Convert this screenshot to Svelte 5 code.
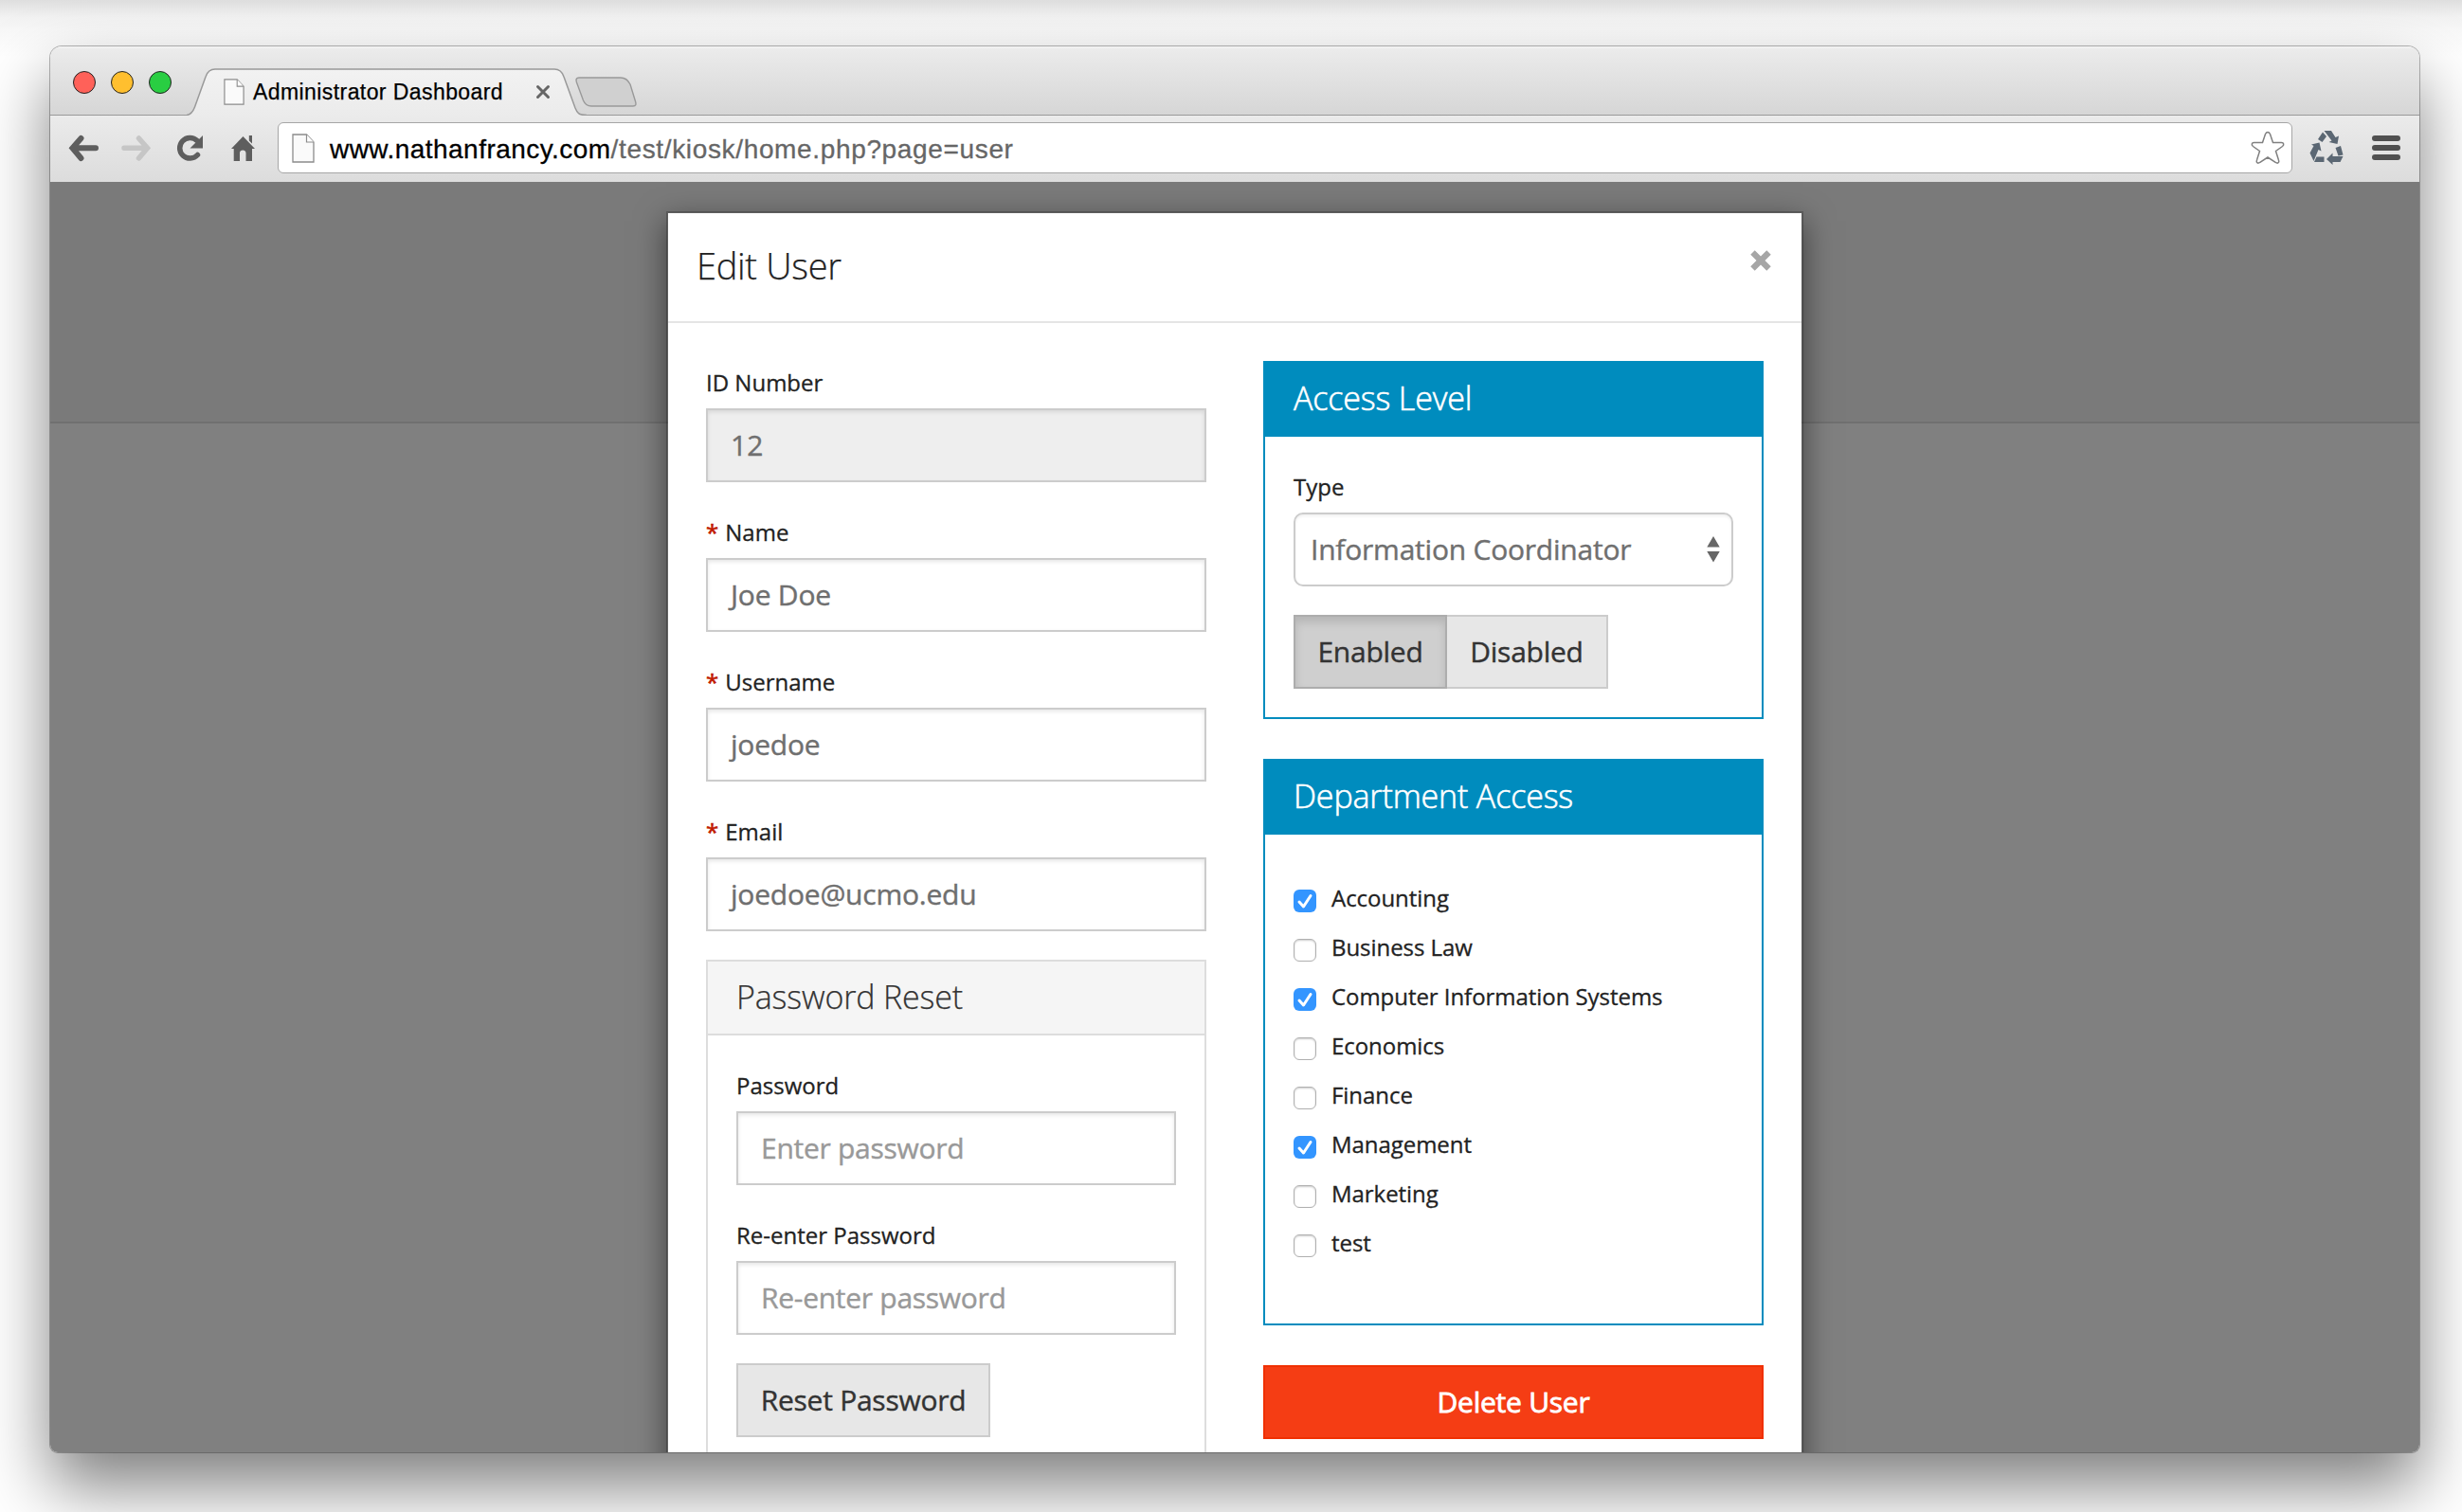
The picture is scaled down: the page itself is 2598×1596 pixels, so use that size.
<script>
  const fields = [
    { label: 'ID Number', value: '12', disabled: true },
    { label: 'Name', value: 'Joe Doe', required: true },
    { label: 'Username', value: 'joedoe', required: true },
    { label: 'Email', value: 'joedoe@ucmo.edu', required: true }
  ];
  const passwords = [
    { label: 'Password', hint: 'Enter password' },
    { label: 'Re-enter Password', hint: 'Re-enter password' }
  ];
  const departments = [
    ['Accounting', true],
    ['Business Law', false],
    ['Computer Information Systems', true],
    ['Economics', false],
    ['Finance', false],
    ['Management', true],
    ['Marketing', false],
    ['test', false]
  ];
</script>

{#snippet pageIcon(cls)}
  <svg class={cls} viewBox="0 0 24 31" preserveAspectRatio="none">
    <path d="M1 1H15.500L23 9V30H1Z" fill="#fafafa" stroke="#8c8c8c" stroke-width="1.300" />
    <path d="M15.500 1V9H23" fill="#fff" stroke="#8c8c8c" stroke-width="1.200" />
  </svg>
{/snippet}

<div class="desktop">
  <div class="window">
    <header class="tabs">
      <div class="lights"><i class="red"></i><i class="yellow"></i><i class="green"></i></div>
      <div class="tab">
        <svg class="tab-shape" viewBox="0 0 422 51">
          <path d="M0 49.500C5 49 7 45 8.500 41L20 9C22 3 25 1 30 1H388C393 1 396 3 398 9L410 42C412 47 413.500 49.500 420 49.500L422 51H0Z" fill="url(#tabfill)" />
          <path d="M0 49.500C5 49 7 45 8.500 41L20 9C22 3 25 1 30 1H388C393 1 396 3 398 9L410 42C412 47 413.500 49.500 422 49.500" fill="none" stroke="#999" stroke-width="1.500" />
          <defs><linearGradient id="tabfill" x2="0" y2="1"><stop stop-color="#f2f2f2" /><stop offset="1" stop-color="#ebebeb" /></linearGradient></defs>
        </svg>
        <div class="tab-content">
          {@render pageIcon('tab-page')}
          <span class="tab-title">Administrator Dashboard</span>
          <svg class="tab-close" viewBox="0 0 16 16"><path d="M2.500 2.500L13.500 13.500M13.500 2.500L2.500 13.500" stroke="#666" stroke-width="3" stroke-linecap="round" /></svg>
        </div>
      </div>
      <svg class="new-tab" viewBox="0 0 65 32">
        <path d="M4 1H48C53 1 56 4 58 8L63.500 26C64.500 29.500 64 31 61 31H17C13 31 10 28.500 8.500 25L1.500 6C.5 3 1 1 4 1Z" fill="#d0d0d0" stroke="#999" stroke-width="1.400" />
      </svg>
    </header>
    <div class="toolbar">
      <svg class="nav" viewBox="0 -1 200 40">
        <path d="M14.500 9L5.500 19.300L14.500 30M6.500 19.300H30" fill="none" stroke="#5e5e5e" stroke-width="6" stroke-linecap="round" />
        <path d="M75.500 9L84.500 19.300L75.500 30M60 19.300H83" fill="none" stroke="#c6c6c6" stroke-width="5.500" stroke-linecap="round" />
        <path d="M137.500 26.500A10.800 10.800 0 1 1 137 11.500" fill="none" stroke="#5e5e5e" stroke-width="5.500" stroke-linecap="round" />
        <path d="M143 6V19.500H129.500Z" fill="#5e5e5e" />
        <path d="M185.500 7L198 20H195V33H188.500V24.500C188.500 20.500 182 20.500 182 24.500V33H175.700V20H173Z" fill="#5e5e5e" />
        <path d="M191.800 6H195V14.500L191.800 11.500Z" fill="#5e5e5e" />
      </svg>
      <div class="address">
        {@render pageIcon('url-page')}
        <span class="url"><b>www.nathanfrancy.com</b>/test/kiosk/home.php?page=user</span>
        <svg class="star" viewBox="0 0 36 36">
          <path d="M18 1.500C19.500 1.500 20 2.500 20.500 3.500L23.500 12.500H32.500C35 12.500 35.500 15 33.500 16.500L26.500 21.500L29.500 31C30.500 33.500 28.500 35 26.500 33.500L18 28L9.500 33.500C7.500 35 5.500 33.500 6.500 31L9.500 21.500L2.500 16.500C.5 15 1 12.500 3.500 12.500H12.500L15.500 3.500C16 2.500 16.500 1.500 18 1.500Z" fill="#fff" stroke="#808080" stroke-width="1.500" />
        </svg>
      </div>
      <svg class="recycle" viewBox="0 0 36 36">
        <g fill="#5b6773">
          <path d="M15.500 0H23L27.500 7L31 5.500L29.500 14L20.500 12L23.500 10.500Z" />
          <path d="M14 1.500L18 6L13.500 12L9 9Z" />
          <path d="M2 14.500L10.500 12.500L12.500 21.500L9.500 20L4.500 32L.5 23.500L4.500 16Z" />
          <path d="M7.500 27.500H15.500V33H5Z" />
          <path d="M27.500 18L33 16L35.500 25.500L30.500 26.500Z" />
          <path d="M18 30L24.500 23.500V27H35.500L32.500 33H24.500V36Z" />
        </g>
      </svg>
      <svg class="menu" viewBox="0 0 30 26">
        <path d="M3 3H27M3 13H27M3 23H27" stroke="#505050" stroke-width="6" stroke-linecap="round" />
      </svg>
    </div>

    <main class="page">
      <section class="modal">
        <header class="modal-head">
          <h1>Edit User</h1>
          <svg class="close" viewBox="0 0 22 22"><path d="M3.200 3.200L18.800 18.800M18.800 3.200L3.200 18.800" stroke="#a6a6a6" stroke-width="5.800" /></svg>
        </header>
        <div class="columns">
          <div class="column">
            {#each fields as f}
              <div class="field">
                <span class="label">{#if f.required}<em>*</em>{' '}{/if}{f.label}</span>
                <div class="input" class:disabled={f.disabled}>{f.value}</div>
              </div>
            {/each}
            <div class="panel plain">
              <h2>Password Reset</h2>
              <div class="panel-body">
                {#each passwords as p}
                  <div class="field">
                    <span class="label">{p.label}</span>
                    <div class="input hint">{p.hint}</div>
                  </div>
                {/each}
                <button class="btn reset">Reset Password</button>
              </div>
            </div>
          </div>
          <div class="column">
            <div class="panel blue">
              <h2>Access Level</h2>
              <div class="panel-body access">
                <span class="label">Type</span>
                <div class="select">
                  <span>Information Coordinator</span>
                  <svg class="arrows" viewBox="0 0 14 28"><path d="M7 0L13.700 11.500H.3ZM7 27.500L.3 16H13.700Z" fill="#666" /></svg>
                </div>
                <div class="group">
                  <button class="btn active">Enabled</button>
                  <button class="btn off">Disabled</button>
                </div>
              </div>
            </div>
            <div class="panel blue">
              <h2>Department Access</h2>
              <div class="panel-body checks">
                {#each departments as [name, on]}
                  <div class="check">
                    <span class="box" class:on>
                      {#if on}<svg viewBox="0 0 24 24"><path d="M6 13L10.500 18L18 6.500" fill="none" stroke="#fff" stroke-width="3" stroke-linecap="round" stroke-linejoin="round" /></svg>{/if}
                    </span>
                    <span class="check-label">{name}</span>
                  </div>
                {/each}
              </div>
            </div>
            <button class="delete">Delete User</button>
          </div>
        </div>
      </section>
    </main>
  </div>
</div>

<style>
  :global(body) { margin: 0; overflow: hidden; }
  .desktop {
    box-sizing: border-box; width: 2598px; height: 1596px; padding: 49px 45px 0 53px; overflow: hidden;
    background: linear-gradient(#dedede, #f2f2f2 18px, #f8f8f8 32px, #fff 60px);
    font-family: "Open Sans", "Noto Sans", sans-serif; color: #222;
  }
  svg { display: block; flex: none; }
  h1, h2 { margin: 0; font-weight: 300; letter-spacing: -.15px; -webkit-text-stroke: .25px currentColor; }
  .window {
    width: 2500px; height: 1484px; border-radius: 12px 12px 8px 8px; overflow: hidden;
    display: flex; flex-direction: column;
    box-shadow: 0 0 0 1px rgba(0, 0, 0, .28), 0 36px 70px rgba(0, 0, 0, .5);
  }
  .tabs {
    box-sizing: border-box; height: 73px; flex: none; display: flex; align-items: flex-end;
    background: linear-gradient(#f4f4f4, #ebebeb 3px, #d6d6d6); border-bottom: 1px solid #999;
  }
  .lights { display: flex; gap: 16px; padding: 0 0 22px 24px; }
  .lights i { box-sizing: border-box; width: 24px; height: 24px; border-radius: 50%; border: 1px solid; }
  .red { background: #ff6159; border-color: #e2463f; }
  .yellow { background: #ffbf2f; border-color: #e0a023; }
  .green { background: #29ce42; border-color: #1dad2b; }
  .tab { display: grid; width: 422px; height: 51px; margin: 0 0 -2px 16px; }
  .tab > * { grid-area: 1 / 1; }
  .tab-shape { width: 422px; height: 51px; }
  .tab-content { display: flex; align-items: center; padding: 0 0 2px 39px; }
  .tab-page { width: 22px; height: 28px; }
  .tab-title {
    margin-left: 9px; width: 265px; font: 23px/28px "Liberation Sans", Arial, sans-serif;
    letter-spacing: .42px; -webkit-text-stroke: .25px currentColor; color: #000; white-space: nowrap;
  }
  .tab-close { width: 16px; height: 16px; margin-left: 33px; }
  .new-tab { width: 65px; height: 32px; margin: 0 0 8px -12px; }
  .toolbar {
    box-sizing: border-box; height: 70px; flex: none; display: flex; align-items: center;
    background: linear-gradient(#ebebeb, #dcdcdc); padding: 0 20px 2px 18px;
  }
  .nav { width: 200px; height: 40px; }
  .address {
    box-sizing: border-box; width: 2126px; height: 54px; margin-left: 22px; padding: 0 7px 0 14px;
    display: flex; align-items: center; background: #fff; border: 1.500px solid #a6a6a6; border-radius: 6px;
  }
  .url-page { width: 24px; height: 31px; }
  .url {
    flex: 1; margin-left: 16px; padding-top: 3px; font: 28px/36px "Liberation Sans", Arial, sans-serif;
    letter-spacing: .65px; -webkit-text-stroke: .3px currentColor; color: #666;
  }
  .url b { font-weight: 400; letter-spacing: .46px; color: #000; }
  .star { width: 36px; height: 36px; }
  .recycle { width: 36px; height: 36px; margin-left: 18px; }
  .menu { width: 30px; height: 26px; margin-left: 30px; }

  .page {
    flex: 1; min-height: 0; display: flex; justify-content: center; align-items: flex-start;
    padding-top: 31px; overflow: hidden;
    background: linear-gradient(#7a7a7a 253px, #707070 253px, #707070 255px, #808080 255px);
  }
  .modal {
    width: 1196px; height: 1500px; flex: none; background: #fff; background-clip: padding-box;
    border: 2px solid rgba(0, 0, 0, .22); box-shadow: 0 10px 30px rgba(0, 0, 0, .5);
  }
  .modal-head {
    box-sizing: border-box; height: 116px; display: flex; justify-content: space-between;
    padding: 29px 31px 0 30px; border-bottom: 2px solid #e5e5e5;
  }
  .modal-head h1 { font-size: 38px; line-height: 52px; letter-spacing: -.3px; }
  .close { width: 24px; height: 24px; margin-top: 9px; }
  .columns { display: flex; justify-content: space-between; padding: 40px; }
  .column { width: 528px; }
  .field { height: 158px; display: flex; flex-direction: column; box-sizing: border-box; }
  .label {
    display: block; height: 50px; line-height: 46px; font-size: 24px; white-space: pre;
    -webkit-text-stroke: .3px currentColor;
  }
  .label em { font-style: normal; letter-spacing: .8px; color: #c01a00; -webkit-text-stroke: .6px currentColor; }
  .input {
    box-sizing: border-box; height: 78px; padding: 0 24px; line-height: 74px; font-size: 30px;
    letter-spacing: -.22px; -webkit-text-stroke: .4px currentColor;
    color: #6f6f6f; background: #fff; border: 2px solid #ccc; box-shadow: inset 0 2px 4px rgba(0, 0, 0, .1);
  }
  .disabled { background: #eee; letter-spacing: 0; }
  .hint { color: #999; letter-spacing: -.28px; }
  .panel { box-sizing: border-box; border: 2px solid #ddd; }
  .panel h2 { box-sizing: border-box; height: 78px; padding: 0 30px; font-size: 34px; line-height: 74px; color: #333; }
  .plain h2 { background: #f5f5f5; border-bottom: 2px solid #ddd; }
  .panel-body { padding: 30px 30px 0; }
  .plain { height: 620px; }
  .blue { border-color: #008cbe; margin-bottom: 42px; }
  .blue h2 { background: #008cbe; color: #fff; -webkit-text-stroke: .6px currentColor; }
  .access { height: 296px; box-sizing: border-box; }
  .select {
    box-sizing: border-box; height: 78px; display: flex; align-items: center; justify-content: space-between;
    padding: 0 12px 0 16px; font-size: 30px; color: #6f6f6f; border: 2px solid #ccc; border-radius: 10px;
    letter-spacing: -.22px; -webkit-text-stroke: .4px currentColor;
    box-shadow: inset 0 2px 3px rgba(0, 0, 0, .06);
  }
  .select span { padding-bottom: 2px; }
  .arrows { width: 14px; height: 28px; }
  .btn {
    box-sizing: border-box; height: 78px; padding: 0; font: 30px/74px "Open Sans", sans-serif; color: #333;
    letter-spacing: -.25px; -webkit-text-stroke: .4px currentColor;
    background: #e7e7e7; border: 2px solid #ccc; border-radius: 0;
  }
  .reset { width: 268px; display: block; }
  .group { display: flex; margin-top: 30px; }
  .active { width: 162px; background: #cfcfcf; border-color: #adadad; box-shadow: inset 0 6px 10px rgba(0, 0, 0, .125); }
  .off { width: 170px; border-left: 0; }
  .checks { box-sizing: border-box; height: 516px; padding-top: 40px; }
  .check { display: flex; height: 52px; }
  .box {
    box-sizing: border-box; width: 24px; height: 24px; margin-top: 18px; border-radius: 6px;
    border: 1.500px solid #b0b0b0; background: #fff; box-shadow: inset 0 1px 2px rgba(0, 0, 0, .2);
  }
  .box.on { border: 0; background: #3395ff; box-shadow: none; }
  .check-label {
    margin-left: 16px; font-size: 24px; line-height: 54px; letter-spacing: -.05px;
    -webkit-text-stroke: .3px currentColor;
  }
  .delete {
    display: block; width: 528px; height: 78px; box-sizing: border-box; padding: 0; border: 2px solid #f03000;
    background: #f53d14; color: #fff; font: 30px/74px "Open Sans", sans-serif;
    letter-spacing: -.25px; -webkit-text-stroke: .8px currentColor;
  }
</style>
